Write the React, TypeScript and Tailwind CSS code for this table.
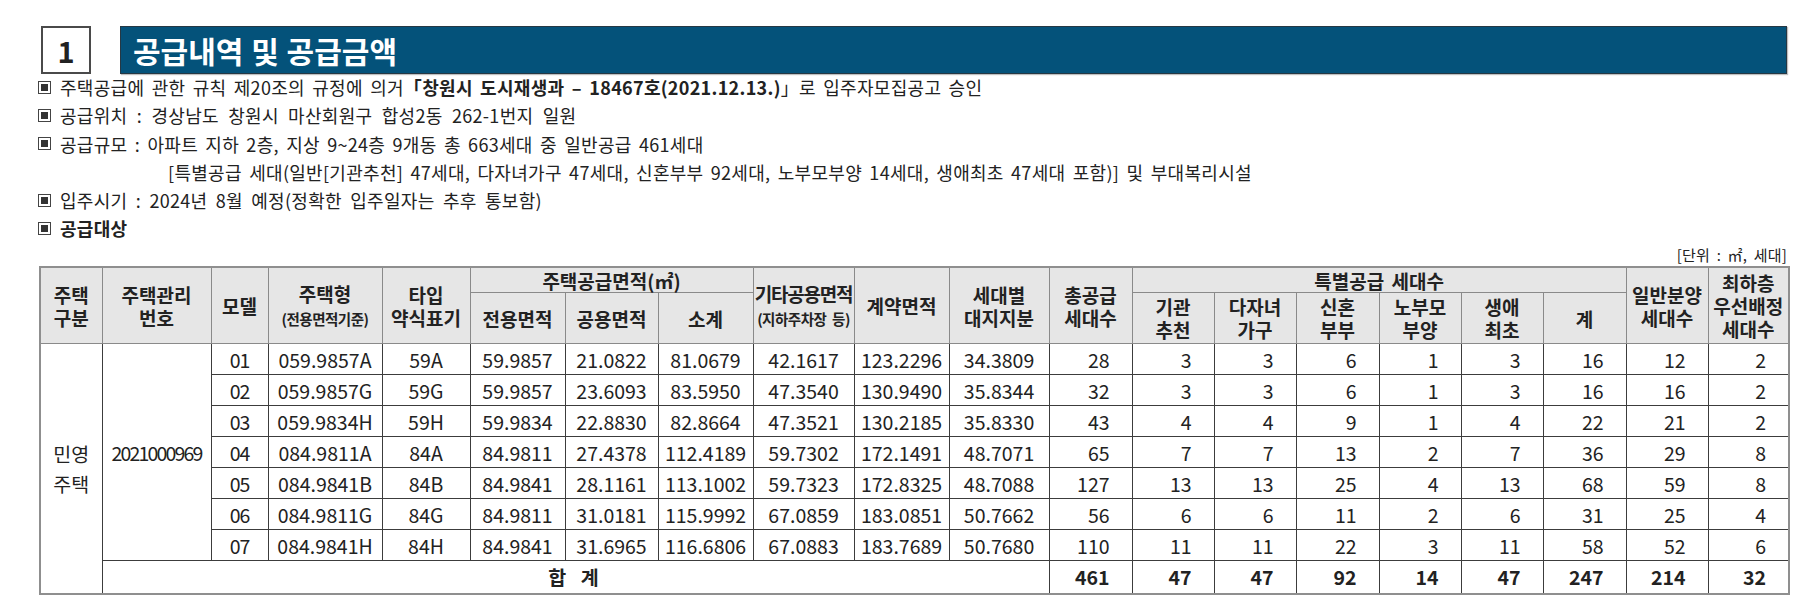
import React from "react";

type Row = {
  model: string;
  type: string;
  short: string;
  areas: string[];
  counts: number[];
};

const rows: Row[] = [
  { model: "01", type: "059.9857A", short: "59A", areas: ["59.9857", "21.0822", "81.0679", "42.1617", "123.2296", "34.3809"], counts: [28, 3, 3, 6, 1, 3, 16, 12, 2] },
  { model: "02", type: "059.9857G", short: "59G", areas: ["59.9857", "23.6093", "83.5950", "47.3540", "130.9490", "35.8344"], counts: [32, 3, 3, 6, 1, 3, 16, 16, 2] },
  { model: "03", type: "059.9834H", short: "59H", areas: ["59.9834", "22.8830", "82.8664", "47.3521", "130.2185", "35.8330"], counts: [43, 4, 4, 9, 1, 4, 22, 21, 2] },
  { model: "04", type: "084.9811A", short: "84A", areas: ["84.9811", "27.4378", "112.4189", "59.7302", "172.1491", "48.7071"], counts: [65, 7, 7, 13, 2, 7, 36, 29, 8] },
  { model: "05", type: "084.9841B", short: "84B", areas: ["84.9841", "28.1161", "113.1002", "59.7323", "172.8325", "48.7088"], counts: [127, 13, 13, 25, 4, 13, 68, 59, 8] },
  { model: "06", type: "084.9811G", short: "84G", areas: ["84.9811", "31.0181", "115.9992", "67.0859", "183.0851", "50.7662"], counts: [56, 6, 6, 11, 2, 6, 31, 25, 4] },
  { model: "07", type: "084.9841H", short: "84H", areas: ["84.9841", "31.6965", "116.6806", "67.0883", "183.7689", "50.7680"], counts: [110, 11, 11, 22, 3, 11, 58, 52, 6] },
];

const totals = [461, 47, 47, 92, 14, 47, 247, 214, 32];

const colWidths = [62, 109, 57, 114, 88, 95, 93, 95, 101, 95, 100, 83, 82, 82, 83, 82, 82, 83, 82, 81];

function Bullet() {
  return (
    <span className="inline-flex w-[13px] h-[13px] border border-[#444] items-center justify-center mr-[9px] shrink-0">
      <span className="w-[7px] h-[7px] bg-[#333]" />
    </span>
  );
}

const th = "border border-[#8a8a8a] bg-[#e6e6e6] font-bold text-[19px] leading-[23px] text-[#222] text-center align-middle p-0 [word-spacing:3px]";
const td = "border border-[#3c3c3c] text-[19.5px] text-[#222] text-center align-middle p-0";
const tdNum = "border border-[#3c3c3c] text-[19.5px] text-[#222] text-right align-middle p-0 pr-[22px]";

export default function App() {
  return (
    <div className="w-[1804px] h-[605px] bg-white overflow-hidden text-[#222]" style={{ fontFamily: '"Noto Sans CJK KR", "Noto Sans", sans-serif' }}>
      {/* Title */}
      <div className="flex pt-[26px] pl-[41px] pr-[17px]">
        <div className="w-[50px] h-[48px] border-2 border-[#4a4a4a] flex items-center justify-center text-[29px] font-bold leading-none">1</div>
        <div className="ml-[29px] flex-1 h-[48px] bg-[#04527a] border border-[#263844] shadow-[1px_1px_1px_rgba(0,0,0,0.25)] flex items-center pl-[12px] text-white text-[30px] font-bold [word-spacing:1px]">
          공급내역 및 공급금액
        </div>
      </div>

      {/* Notes */}
      <div className="pl-[38px] text-[18px] leading-[28.3px] mt-[-1px] tracking-[0.3px] [word-spacing:3px]">
        <div className="flex items-center">
          <Bullet />
          <span>
            주택공급에 관한 규칙 제20조의 규정에 의거<b>「창원시 도시재생과 – 18467호(2021.12.13.)</b>」로 입주자모집공고 승인
          </span>
        </div>
        <div className="flex items-center">
          <Bullet />
          <span className="[word-spacing:5px]">공급위치 : 경상남도 창원시 마산회원구 합성2동 262-1번지 일원</span>
        </div>
        <div className="flex items-center">
          <Bullet />
          <span>공급규모 : 아파트 지하 2층, 지상 9~24층 9개동 총 663세대 중 일반공급 461세대</span>
        </div>
        <div className="pl-[130px]">
          [특별공급 세대(일반[기관추천] 47세대, 다자녀가구 47세대, 신혼부부 92세대, 노부모부양 14세대, 생애최초 47세대 포함)] 및 부대복리시설
        </div>
        <div className="flex items-center">
          <Bullet />
          <span className="[word-spacing:4px]">입주시기 : 2024년 8월 예정(정확한 입주일자는 추후 통보함)</span>
        </div>
        <div className="flex items-center">
          <Bullet />
          <span className="font-bold">공급대상</span>
        </div>
      </div>

      <div className="flex justify-end pr-[17px] text-[15px] leading-[20px] mt-[2px] tracking-[0.2px] [word-spacing:3px]">[단위 : ㎡, 세대]</div>

      {/* Table */}
      <table className="ml-[39px] mt-[1px] table-fixed border-collapse border-2 border-[#8f8f8f] w-[1749px]">
        <colgroup>
          {colWidths.map((w, i) => (
            <col key={i} style={{ width: w }} />
          ))}
        </colgroup>
        <thead>
          <tr className="h-[26px]">
            <th rowSpan={2} className={th}>주택<br />구분</th>
            <th rowSpan={2} className={th}>주택관리<br />번호</th>
            <th rowSpan={2} className={th}>모델</th>
            <th rowSpan={2} className={th}>
              주택형
              <br />
              <span className="text-[14.5px] tracking-[-0.5px]">(전용면적기준)</span>
            </th>
            <th rowSpan={2} className={th}>타입<br />약식표기</th>
            <th colSpan={3} className={`${th} h-[26px]`}>주택공급면적(㎡)</th>
            <th rowSpan={2} className={th}>
              <span className="tracking-[-1.2px]">기타공용면적</span>
              <br />
              <span className="text-[14.5px] tracking-[-0.5px]">(지하주차장 등)</span>
            </th>
            <th rowSpan={2} className={th}>계약면적</th>
            <th rowSpan={2} className={th}>세대별<br />대지지분</th>
            <th rowSpan={2} className={th}>총공급<br />세대수</th>
            <th colSpan={6} className={`${th} h-[26px]`}>특별공급 세대수</th>
            <th rowSpan={2} className={th}>일반분양<br />세대수</th>
            <th rowSpan={2} className={th}>최하층<br />우선배정<br />세대수</th>
          </tr>
          <tr className="h-[51px]">
            <th className={th}>전용면적</th>
            <th className={th}>공용면적</th>
            <th className={th}>소계</th>
            <th className={th}>기관<br />추천</th>
            <th className={th}>다자녀<br />가구</th>
            <th className={th}>신혼<br />부부</th>
            <th className={th}>노부모<br />부양</th>
            <th className={th}>생애<br />최초</th>
            <th className={th}>계</th>
          </tr>
        </thead>
        <tbody>
          {rows.map((r, i) => (
            <tr key={r.model} className="h-[31px]">
              {i === 0 && (
                <td rowSpan={8} className={`${td} leading-[30px]`}>
                  민영
                  <br />
                  주택
                </td>
              )}
              {i === 0 && (
                <td rowSpan={7} className={`${td} tracking-[-1.8px]`}>
                  2021000969
                </td>
              )}
              <td className={`${td} tracking-[-1px]`}>{r.model}</td>
              <td className={td}>{r.type}</td>
              <td className={td}>{r.short}</td>
              {r.areas.map((a, j) => (
                <td key={j} className={td}>{a}</td>
              ))}
              {r.counts.map((c, j) => (
                <td key={j} className={tdNum}>{c}</td>
              ))}
            </tr>
          ))}
          <tr className="h-[33px]">
            <td colSpan={10} className={`${td} font-bold tracking-[4px] [word-spacing:2px]`}>합 계</td>
            {totals.map((c, j) => (
              <td key={j} className={`${tdNum} font-bold`}>{c}</td>
            ))}
          </tr>
        </tbody>
      </table>
    </div>
  );
}
